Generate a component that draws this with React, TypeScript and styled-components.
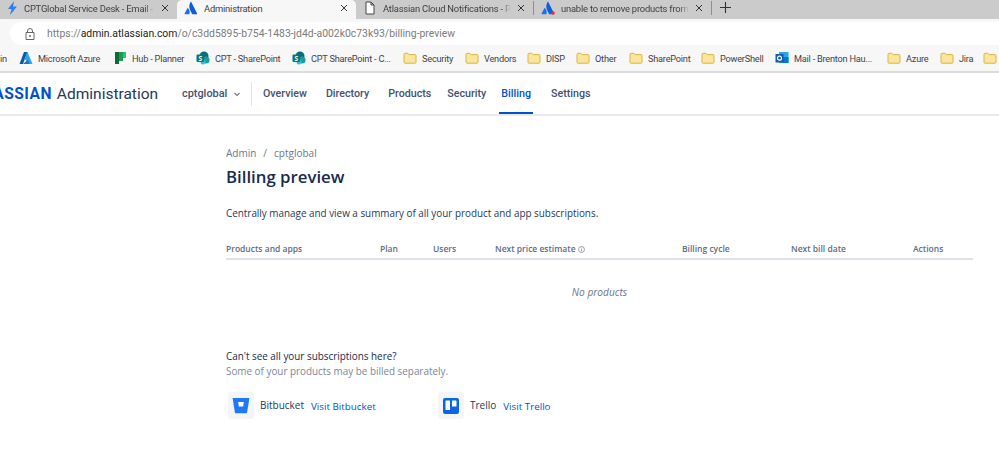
import React from "react";
import styled, { createGlobalStyle } from "styled-components";

const Global = createGlobalStyle`
  html, body { margin: 0; padding: 0; background: #fff; overflow: hidden; }
  body { width: 999px; height: 457px; font-family: "Open Sans", "Liberation Sans", sans-serif; }
  #root { width: 999px; height: 457px; overflow: hidden; }
`;

const TabStrip = styled.div`
  display: flex; align-items: stretch; height: 19px; background: #cbcbcb; overflow: hidden;
`;
const Tab = styled.div<{ $active?: boolean; $w: number }>`
  display: flex; align-items: center; box-sizing: border-box; width: ${p => p.$w}px;
  padding: 0 8px 3px 7px; gap: 6px; height: 19px; flex: none;
  background: ${p => (p.$active ? "#f7f7f7" : "#cbcbcb")};
  ${p => (p.$active ? "border-radius: 5px 5px 0 0;" : "")}
`;
const TabTitle = styled.span<{ $fade?: boolean }>`
  flex: 1; min-width: 0; white-space: nowrap; overflow: hidden; font-size: 9.4px; letter-spacing: -0.2px; color: #3f3f3f;
  font-family: Roboto, sans-serif; line-height: 15px;
  ${p => (p.$fade ? "mask-image: linear-gradient(to right, #000 calc(100% - 10px), transparent);" : "")}
`;
const TabClose = styled.svg`width: 8px; height: 8px; flex: none;`;
const TabSep = styled.div`width: 1px; height: 14px; margin-top: 1px; background: #8e8e8e; flex: none;`;
const NewTab = styled.svg`width: 13px; height: 13px; margin: 1px 0 0 7px; flex: none;`;

const Toolbar = styled.div`
  height: 26px; box-sizing: border-box; background: #f7f7f7; padding: 3px 0 0 10px; display: flex;
`;
const Omnibox = styled.div`
  flex: 1; height: 23px; box-sizing: border-box; background: #fff; border-radius: 11px 0 0 11px;
  display: flex; align-items: center; padding-left: 15px; gap: 12px;
`;
const Url = styled.span`
  font-family: Roboto, sans-serif; font-size: 10.4px; color: #7b7b7b; white-space: nowrap;
  b { font-weight: 400; color: #222; }
`;

const Bookmarks = styled.div`
  height: 26px; background: #f7f7f7; border-bottom: 2px solid #dcdcdc; display: flex; align-items: center;
  overflow: hidden;
`;
const Mark = styled.div<{ $w: number }>`
  display: flex; align-items: center; gap: 5px; width: ${p => p.$w}px; flex: none;
  font-family: Roboto, sans-serif; font-size: 9.2px; letter-spacing: -0.22px; color: #444; white-space: nowrap; overflow: hidden;
`;
const MarkIcon = styled.svg`width: 14px; height: 14px; flex: none;`;
const BoltIcon = styled.svg`width: 11px; height: 14px; flex: none;`;

const Nav = styled.nav`
  height: 41px; border-bottom: 2px solid #e8e9ed; display: flex; align-items: stretch;
`;
const Brand = styled.div`
  display: flex; align-items: center; margin-left: -36px; width: 194px; flex: none; white-space: nowrap;
  font-family: Roboto, sans-serif; font-size: 15.5px; color: #253858; gap: 5px;
  b { color: #0052cc; font-weight: 700; letter-spacing: 0.03em; font-size: 15.6px; }
`;
const Org = styled.div`
  display: flex; align-items: center; gap: 6px; margin-left: 24px; width: 69px; flex: none;
  font-family: Roboto, sans-serif; font-size: 10.9px; font-weight: 500; color: #42526e;
`;
const Divider = styled.div`width: 1px; height: 24px; background: #e1e3e8; align-self: center; flex: none;`;
const NavItem = styled.div<{ $active?: boolean; $ml: number }>`
  display: flex; align-items: center; margin-left: ${p => p.$ml}px; padding: 1px 2px 0; height: 41px; box-sizing: border-box;
  font-family: Roboto, sans-serif; font-size: 10.7px; font-weight: 500; color: ${p => (p.$active ? "#0052cc" : "#42526e")};
  border-bottom: 2px solid ${p => (p.$active ? "#0052cc" : "transparent")};
  margin-bottom: -2px;
`;

const Page = styled.main`
  padding: 30px 26px 0 226px;
  color: #172b4d;
`;
const Crumbs = styled.div`
  font-size: 10px; color: #6b778c; line-height: 14px; display: flex; gap: 7px;
`;
const Title = styled.h1`
  margin: 4px 0 0; font-size: 16.8px; font-weight: 600; line-height: 26px; color: #172b4d;
  font-family: "Open Sans", sans-serif;
`;
const Lead = styled.p`
  margin: 16px 0 0; font-size: 9.9px; line-height: 14px; color: #253858;
`;
const Head = styled.div`
  display: grid; grid-template-columns: 154px 53px 62px 187px 109px 122px 1fr;
  margin-top: 22px; height: 16px; border-bottom: 2px solid #dfe1e6;
`;
const HeadCell = styled.div`
  font-size: 8.5px; font-weight: 600; color: #5e6c84; line-height: 14px; display: flex; align-items: center; gap: 2px; height: 14px;
`;
const InfoIcon = styled.svg`width: 7px; height: 7px;`;
const Empty = styled.div`
  text-align: center; font-style: italic; font-size: 10.2px; color: #6b778c; line-height: 14px; margin-top: 25px;
`;
const Help = styled.div`margin-top: 50px; font-size: 9.9px; line-height: 15px; color: #172b4d;`;
const HelpSub = styled.div`color: #7a869a;`;
const Products = styled.div`display: flex; margin: 13px 0 0 2px;`;
const Product = styled.div<{ $w: number }>`display: flex; align-items: center; width: ${p => p.$w}px; flex: none;`;
const Tile = styled.div`
  width: 26px; height: 27px; background: #f4f5f7; border-radius: 3px; display: flex; align-items: center; justify-content: center; flex: none;
`;
const ProductName = styled.span`font-size: 10px; color: #253858; margin-left: 6px; margin-bottom: 2px;`;
const VisitLink = styled.a`font-size: 9.8px; color: #0052cc; margin-left: 7px; margin-top: 1px;`;

const Close = () => (
  <TabClose viewBox="0 0 8 8"><path d="M1 1l6 6M7 1L1 7" stroke="#333" strokeWidth="1" /></TabClose>
);
const Atl = ({ red }: { red?: boolean }) => (
  <MarkIcon viewBox="0 0 14 14">
    <path d="M4 7.2c-.2-.2-.5-.2-.6.1L.6 12.6c-.1.3 0 .6.4.6h4c.2 0 .3-.1.4-.3.8-1.800.3-4.300-1.400-5.700z" fill="#1f6fe6" />
    <path d="M6.600 1C5 3.500 4.900 6.300 6 8.700l2 4.200c.1.200.2.300.4.300h4.300c.3 0 .5-.3.4-.6L7.300 1c-.2-.3-.6-.3-.7 0z" fill="#0f5fdc" />
    {red && <circle cx="12" cy="12" r="1.800" fill="#e5322d" />}
  </MarkIcon>
);
const Bolt = () => (
  <BoltIcon viewBox="0 0 11 14"><path d="M7 0L1 8h3.500L3 14l7-8.500H6z" fill="#2d7ff0" /></BoltIcon>
);
const Doc = () => (
  <MarkIcon viewBox="0 0 14 14"><path d="M3 1h5l3 3v9H3zM8 1v3h3" fill="#fff" stroke="#444" strokeWidth="1" /></MarkIcon>
);
const Folder = () => (
  <MarkIcon viewBox="0 0 14 14"><path d="M1 3.200c0-.5.400-.9.900-.9h3l1.200 1.300h6c.500 0 .900.400.900.900v6.800c0 .5-.4.900-.9.900H1.900c-.5 0-.9-.4-.9-.9z" fill="#fbe59a" stroke="#d9b44a" strokeWidth="1" /></MarkIcon>
);
const Share = () => (
  <MarkIcon viewBox="0 0 14 14">
    <circle cx="8" cy="5" r="4.500" fill="#0a6f74" /><circle cx="10" cy="9" r="3.500" fill="#1a9ba1" /><circle cx="7" cy="11" r="2.500" fill="#37c6d0" />
    <rect x="0.500" y="3.500" width="7.500" height="7.500" rx="1" fill="#03787c" />
    <text x="4.200" y="9.500" fontSize="6.500" fontWeight="700" fill="#fff" textAnchor="middle" fontFamily="Open Sans">S</text>
  </MarkIcon>
);
const Azure = () => (
  <MarkIcon viewBox="0 0 14 14">
    <path d="M5 1h3.500L4 13H.5z" fill="#0c59a4" /><path d="M8.500 1L13.500 13H9.500L7 9H4.800z" fill="#2fa5ea" /><path d="M4 13l5-4.500 1.500 4.500z" fill="#1277cc" />
  </MarkIcon>
);
const Planner = () => (
  <MarkIcon viewBox="0 0 14 14">
    <path d="M2 1h4v12H2z" fill="#0c6b36" /><path d="M6 1h4v9H6z" fill="#1c9a52" /><path d="M10 1h3v6h-3z" fill="#30c070" />
  </MarkIcon>
);
const Outlook = () => (
  <MarkIcon viewBox="0 0 14 14">
    <rect x="4" y="1" width="9.500" height="11" fill="#28a8ea" /><rect x="8" y="6" width="5.500" height="6" fill="#0078d4" />
    <rect x="0.500" y="3" width="8" height="8.500" fill="#0f5cad" /><circle cx="4.500" cy="7.200" r="2" fill="none" stroke="#fff" strokeWidth="1.200" />
  </MarkIcon>
);
const LockIcon = styled.svg`width: 10px; height: 12px; flex: none;`;
const Lock = () => (
  <LockIcon viewBox="0 0 10 12"><path d="M2.500 4.500V3a2.500 2.500 0 015 0v1.500M1 4.500h8v7H1z" fill="none" stroke="#666" /><circle cx="5" cy="8" r="1" fill="#666" /></LockIcon>
);

const marks: [React.ReactNode, string, number][] = [
  [<Azure key="a" />, "Microsoft Azure", 94],
  [<Planner key="p" />, "Hub - Planner", 83],
  [<Share key="s" />, "CPT - SharePoint", 96],
  [<Share key="s2" />, "CPT SharePoint - C...", 111],
  [<Folder key="f" />, "Security", 62],
  [<Folder key="f2" />, "Vendors", 62],
  [<Folder key="f3" />, "DISP", 49],
  [<Folder key="f4" />, "Other", 53],
  [<Folder key="f5" />, "SharePoint", 72],
  [<Folder key="f6" />, "PowerShell", 74],
  [<Outlook key="o" />, "Mail - Brenton Hau...", 112],
  [<Folder key="f7" />, "Azure", 53],
  [<Folder key="f8" />, "Jira", 43],
  [<Folder key="f9" />, "", 20],
];

export default function App() {
  return (
    <>
      <Global />
      <TabStrip>
        <Tab $w={177}><Bolt /><TabTitle $fade>CPTGlobal Service Desk - Email -</TabTitle><Close /></Tab>
        <Tab $w={179} $active><Atl /><TabTitle>Administration</TabTitle><Close /></Tab>
        <Tab $w={177}><Doc /><TabTitle $fade>Atlassian Cloud Notifications - Pr</TabTitle><Close /></Tab>
        <TabSep />
        <Tab $w={177}><Atl red /><TabTitle $fade>unable to remove products from</TabTitle><Close /></Tab>
        <TabSep />
        <NewTab viewBox="0 0 13 13"><path d="M6.500 1v11M1 6.500h11" stroke="#333" strokeWidth="1.100" /></NewTab>
      </TabStrip>
      <Toolbar>
        <Omnibox>
          <Lock />
          <Url>https://<b>admin.atlassian.com</b>/o/c3dd5895-b754-1483-jd4d-a002k0c73k93/billing-preview</Url>
        </Omnibox>
      </Toolbar>
      <Bookmarks>
        <Mark $w={19}><span>in</span></Mark>
        {marks.map(([icon, label, w], i) => (
          <Mark $w={w} key={i}>{icon}<span>{label}</span></Mark>
        ))}
      </Bookmarks>
      <Nav>
        <Brand><b>ATLASSIAN</b>Administration</Brand>
        <Org>cptglobal
          <svg width="8" height="8" viewBox="0 0 8 8"><path d="M1.500 3l2.500 2.500L6.500 3" fill="none" stroke="#6b778c" strokeWidth="1.200" /></svg>
        </Org>
        <Divider />
        <NavItem $ml={9}>Overview</NavItem>
        <NavItem $ml={15}>Directory</NavItem>
        <NavItem $ml={15}>Products</NavItem>
        <NavItem $ml={12}>Security</NavItem>
        <NavItem $ml={11} $active>Billing</NavItem>
        <NavItem $ml={16}>Settings</NavItem>
      </Nav>
      <Page>
        <Crumbs><span>Admin</span><span>/</span><span>cptglobal</span></Crumbs>
        <Title>Billing preview</Title>
        <Lead>Centrally manage and view a summary of all your product and app subscriptions.</Lead>
        <Head>
          <HeadCell>Products and apps</HeadCell>
          <HeadCell>Plan</HeadCell>
          <HeadCell>Users</HeadCell>
          <HeadCell>Next price estimate
            <InfoIcon viewBox="0 0 8 8"><circle cx="4" cy="4" r="3.400" fill="none" stroke="#6b778c" strokeWidth=".8" /><path d="M4 3.500V6M4 2v.8" stroke="#6b778c" strokeWidth=".8" /></InfoIcon>
          </HeadCell>
          <HeadCell>Billing cycle</HeadCell>
          <HeadCell>Next bill date</HeadCell>
          <HeadCell>Actions</HeadCell>
        </Head>
        <Empty>No products</Empty>
        <Help>
          Can't see all your subscriptions here?
          <HelpSub>Some of your products may be billed separately.</HelpSub>
        </Help>
        <Products>
          <Product $w={210}>
            <Tile>
              <svg width="18" height="17" viewBox="0 0 18 17"><path d="M.6 1h16.800l-2.300 14.500c-.1.500-.4.700-.8.700H3.700c-.4 0-.7-.2-.8-.7z" fill="#1f78f5" /><path d="M6.200 5h5.600l-.6 4.500H6.800z" fill="#fff" /></svg>
            </Tile>
            <ProductName>Bitbucket</ProductName>
            <VisitLink>Visit Bitbucket</VisitLink>
          </Product>
          <Product $w={140}>
            <Tile>
              <svg width="16" height="16" viewBox="0 0 16 16"><rect width="16" height="16" rx="2" fill="#0c66e4" /><rect x="2.500" y="2.500" width="4.500" height="9.500" rx=".6" fill="#fff" /><rect x="9" y="2.500" width="4.500" height="6" rx=".6" fill="#fff" /></svg>
            </Tile>
            <ProductName>Trello</ProductName>
            <VisitLink>Visit Trello</VisitLink>
          </Product>
        </Products>
      </Page>
    </>
  );
}
